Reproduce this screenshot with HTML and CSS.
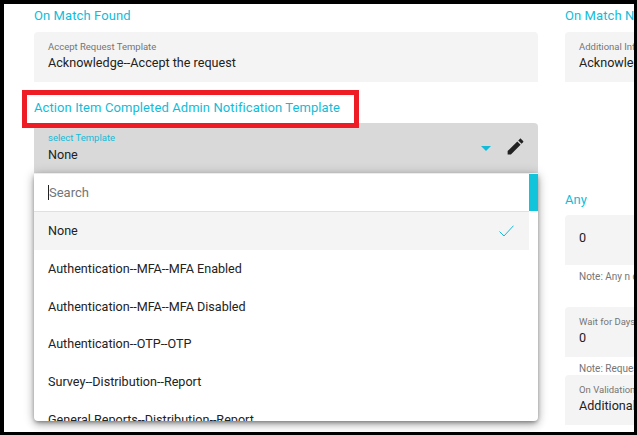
FILE: index.html
```html
<!DOCTYPE html>
<html>
  <head>
    <meta charset="utf-8" />
    <title>Template settings</title>
    <link rel="stylesheet" href="styles.css">
  </head>
  <body>
    <div class="frame">
      <div class="columns">
        <section class="col col-left">
          <h3 class="title">On Match Found</h3>
          <div class="field">
            <span class="field-label">Accept Request Template</span>
            <span class="field-value">Acknowledge--Accept the request</span>
          </div>

          <h3 class="title title-second">Action Item Completed Admin Notification Template</h3>
          <div class="select-wrap">
            <div class="field field-open">
              <div class="field-text">
                <span class="field-label label-active">select Template</span>
                <span class="field-value">None</span>
              </div>
              <span class="arrow"></span>
              <svg class="edit-icon" viewBox="0 0 24 24"><path d="M3 17.25V21h3.75L17.81 9.94l-3.75-3.75L3 17.25zM20.71 7.04c.39-.39.39-1.02 0-1.41l-2.34-2.34c-.39-.39-1.02-.39-1.41 0l-1.83 1.83 3.75 3.75 1.83-1.83z"/></svg>
            </div>

            <div class="dropdown">
              <div class="options">
                <div class="search"><span class="caret"></span><span class="placeholder">Search</span></div>
                <div class="option option-selected">
                  <span>None</span>
                  <svg class="check" viewBox="0 0 15 12"><path d="M0.5 6.5L5 11L14.5 0.7"/></svg>
                </div>
                <div class="option">Authentication--MFA--MFA Enabled</div>
                <div class="option">Authentication--MFA--MFA Disabled</div>
                <div class="option">Authentication--OTP--OTP</div>
                <div class="option">Survey--Distribution--Report</div>
                <div class="option">General Reports--Distribution--Report</div>
              </div>
              <div class="scrollbar"><div class="thumb"></div></div>
            </div>
          </div>
        </section>

        <section class="col col-right">
          <h3 class="title">On Match Not Found</h3>
          <div class="field">
            <span class="field-label">Additional Information Template</span>
            <span class="field-value">Acknowledge--Additional Information</span>
          </div>

          <h3 class="title title-any">Any</h3>
          <div class="field field-single">
            <span class="field-value">0</span>
          </div>
          <p class="note note-any">Note: Any n of the approvers</p>

          <div class="field">
            <span class="field-label">Wait for Days</span>
            <span class="field-value">0</span>
          </div>
          <p class="note note-wait">Note: Request will wait</p>

          <div class="field">
            <span class="field-label">On Validation Template</span>
            <span class="field-value">Additional Information</span>
          </div>
        </section>
      </div>

      <div class="highlight"></div>
    </div>
  </body>
</html>
```

FILE: styles.css
```css
* {
  box-sizing: border-box;
}

body {
  margin: 0;
  font-family: Roboto, sans-serif;
  color: #222;
}

.frame {
  position: relative;
  width: 637px;
  height: 435px;
  overflow: hidden;
  background: #fff;
  border-style: solid;
  border-color: #000;
  border-width: 4px 3px 3px 4px;
}

.columns {
  display: flex;
  gap: 27px;
  padding-left: 30px;
}

.col-left {
  flex: 0 0 504px;
}

.col-right {
  flex: 0 0 300px;
}

.title {
  margin: 0;
  height: 28px;
  padding-top: 4px;
  font-size: 13px;
  line-height: 16px;
  font-weight: 400;
  letter-spacing: 0.09px;
  color: #12bcd8;
}

.title-second {
  height: 41px;
  padding-top: 18px;
}

.title-any {
  height: 133px;
  padding-top: 110px;
}

.field {
  display: flex;
  flex-direction: column;
  height: 50px;
  padding: 8px 14px 0;
  background: #f4f4f4;
  border-radius: 4px 4px 0 0;
}

.field-label {
  font-size: 9.5px;
  line-height: 13px;
  margin-bottom: 1px;
  color: #757575;
}

.label-active {
  color: #12bcd8;
  display: block;
  margin-bottom: 2px;
}

.field-value {
  display: block;
  font-size: 12.6px;
  line-height: 18px;
  white-space: nowrap;
}

.field-single {
  justify-content: center;
  padding-top: 0;
  padding-bottom: 5px;
}

.select-wrap {
  position: relative;
}

.field-open {
  flex-direction: row;
  align-items: center;
  padding: 0 14px;
  background: #d9d9d9;
}

.field-text {
  flex: 1;
  align-self: flex-start;
  padding-top: 8px;
}

.arrow {
  width: 0;
  height: 0;
  margin-right: 14px;
  margin-top: 0;
  border-left: 5px solid transparent;
  border-right: 5px solid transparent;
  border-top: 5px solid #12bcd8;
}

.edit-icon {
  width: 21px;
  height: 21px;
  margin-right: -2px;
  margin-top: -4px;
  fill: #222;
}

.dropdown {
  position: absolute;
  top: 50px;
  left: 0;
  right: 0;
  height: 248px;
  display: flex;
  overflow: hidden;
  background: #fff;
  border-top: 1px solid #ececec;
  border-radius: 0 0 4px 4px;
  box-shadow: 0 2px 4px -1px rgba(0, 0, 0, 0.4), 0 4px 8px rgba(0, 0, 0, 0.2), 0 1px 12px rgba(0, 0, 0, 0.2);
}

.options {
  flex: 1;
  min-width: 0;
}

.search {
  display: flex;
  align-items: center;
  height: 38px;
  padding-left: 14px;
  border-bottom: 1px solid #e0e0e0;
  font-size: 13px;
}

.caret {
  width: 1px;
  height: 15px;
  background: #222;
}

.placeholder {
  color: #757575;
}

.option {
  display: flex;
  align-items: center;
  justify-content: space-between;
  height: 37.7px;
  padding: 0 15px 0 14px;
  font-size: 12.6px;
  white-space: nowrap;
}

.option-selected {
  background: #f4f4f4;
}

.check {
  width: 15px;
  height: 12px;
  fill: none;
  stroke: #12bcd8;
  stroke-width: 1;
}

.scrollbar {
  flex: 0 0 9px;
}

.thumb {
  height: 37px;
  background: #12c3dc;
}

.note {
  margin: 0;
  padding-left: 14px;
  font-size: 10px;
  line-height: 12px;
  color: #757575;
  white-space: nowrap;
}

.note-any {
  height: 42px;
  padding-top: 6px;
}

.note-wait {
  height: 18px;
  padding-top: 6px;
}

/* annotation box drawn over the screenshot */
.highlight {
  position: absolute;
  left: 18px;
  top: 86px;
  width: 337px;
  height: 38px;
  border: 5px solid #ee1c25;
}
```
